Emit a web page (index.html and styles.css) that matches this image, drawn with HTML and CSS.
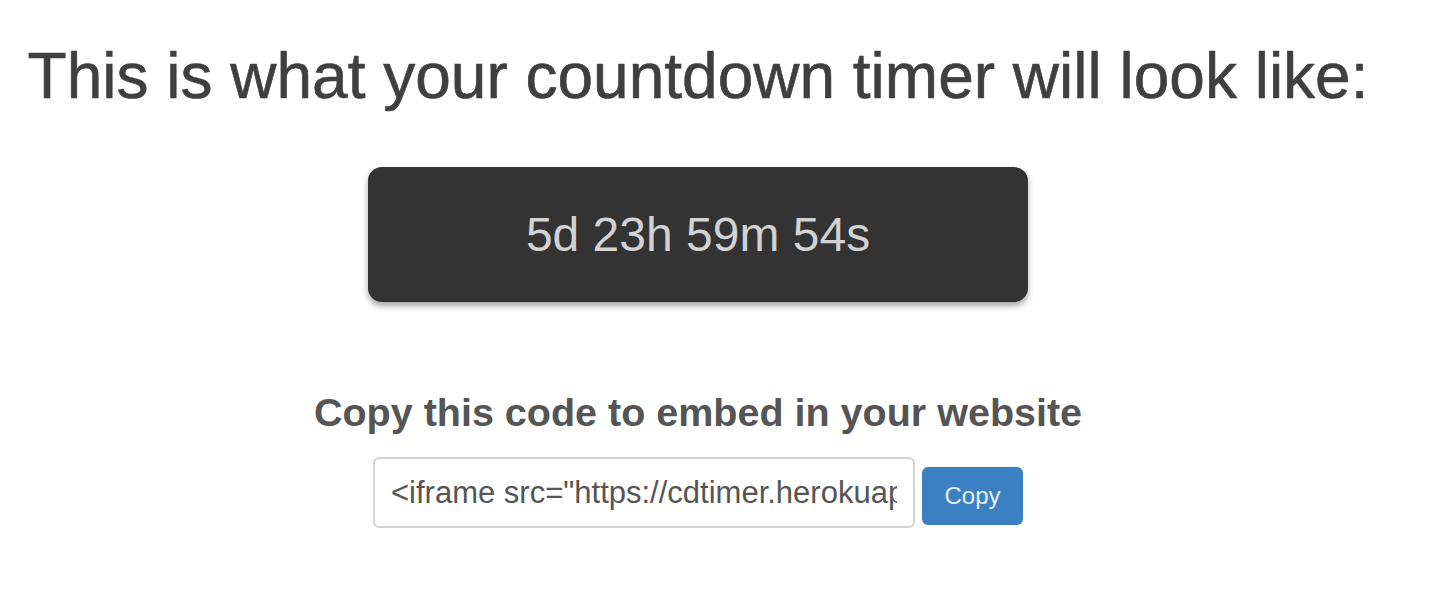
FILE: index.html
```html
<!DOCTYPE html>
<html lang="en">
<head>
<meta charset="utf-8">
<title>Countdown timer preview</title>
<link rel="stylesheet" href="styles.css">
</head>
<body>
<main class="page">
  <h1 class="title">This is what your countdown timer will look like:</h1>
  <div class="timer">5d 23h 59m 54s</div>
  <h3 class="embed-title">Copy this code to embed in your website</h3>
  <div class="embed-row">
    <input class="embed-input" type="text" readonly value='&lt;iframe src="https://cdtimer.herokuapp.com/embed" width="330" height="70" frameborder="0"&gt;&lt;/iframe&gt;'>
    <button class="copy-btn" type="button">Copy</button>
  </div>
</main>
</body>
</html>
```

FILE: styles.css
```css
html, body {
  margin: 0;
  padding: 0;
  background: #ffffff;
}

body {
  font-family: "Liberation Sans", Arial, Helvetica, sans-serif;
  color: #444444;
}

.page {
  width: 1396px;
  padding-top: 39px;
  display: flex;
  flex-direction: column;
  align-items: center;
}

.title {
  margin: 0;
  font-size: 64px;
  font-weight: normal;
  line-height: 74px;
  color: #3f3f3f;
  white-space: nowrap;
  -webkit-text-stroke: 0.6px #3f3f3f;
}

.timer {
  margin-top: 54px;
  width: 660px;
  height: 135px;
  line-height: 135px;
  text-align: center;
  background: #333333;
  color: #d2d2d2;
  font-size: 48px;
  border-radius: 14px;
  box-shadow: 0 4px 6px rgba(0, 0, 0, 0.35);
}

.embed-title {
  margin: 87px 0 0;
  font-size: 39.5px;
  line-height: 46px;
  font-weight: bold;
  color: #555555;
  white-space: nowrap;
}

.embed-row {
  margin-top: 22px;
  display: flex;
  align-items: flex-start;
  gap: 7px;
}

.embed-input {
  box-sizing: border-box;
  width: 542px;
  height: 71px;
  padding: 0 16px;
  border: 2px solid #d4d4d4;
  border-radius: 6px;
  font-family: "Liberation Sans", Arial, Helvetica, sans-serif;
  font-size: 31px;
  color: #555555;
  background: #ffffff;
  outline: none;
}

.copy-btn {
  margin-top: 10px;
  width: 101px;
  height: 58px;
  border: none;
  border-radius: 6px;
  background: #3a80c2;
  color: #e6eef7;
  font-family: "Liberation Sans", Arial, Helvetica, sans-serif;
  font-size: 24px;
  padding: 0;
}
```
